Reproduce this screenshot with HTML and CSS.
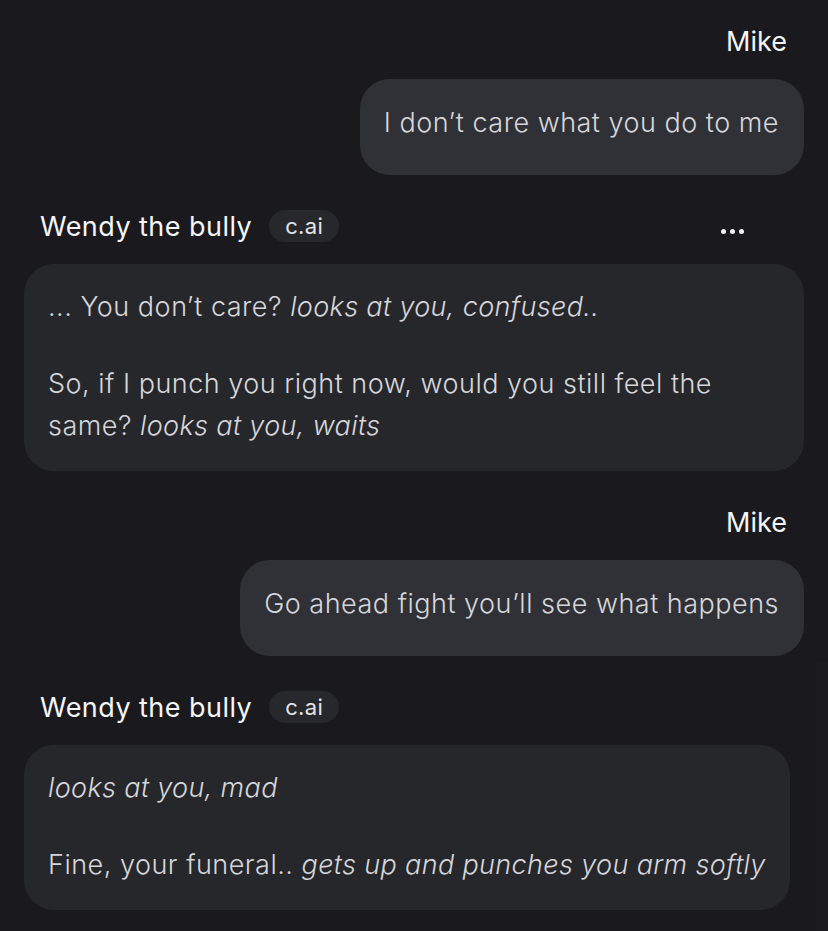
FILE: index.html
```html
<!DOCTYPE html>
<html lang="en">
<head>
<meta charset="utf-8">
<title>Chat</title>
<link rel="stylesheet" href="styles.css">
</head>
<body>
<main class="chat">
  <section class="group group-user">
    <div class="name-row"><span class="name">Mike</span></div>
    <div class="bubble bubble-user"><p>I don’t care what you do to me</p></div>
  </section>

  <section class="group group-bot">
    <div class="name-row">
      <span class="name">Wendy the bully</span>
      <span class="badge">c.ai</span>
      <span class="more" aria-label="More"><i></i><i></i><i></i></span>
    </div>
    <div class="bubble bubble-bot">
      <p>... You don’t care? <em>looks at you, confused..</em></p>
      <p>So, if I punch you right now, would you still feel the same? <em>looks at you, waits</em></p>
    </div>
  </section>

  <section class="group group-user">
    <div class="name-row"><span class="name">Mike</span></div>
    <div class="bubble bubble-user"><p>Go ahead fight you’ll see what happens</p></div>
  </section>

  <section class="group group-bot">
    <div class="name-row">
      <span class="name">Wendy the bully</span>
      <span class="badge">c.ai</span>
    </div>
    <div class="bubble bubble-bot">
      <p><em>looks at you, mad</em></p>
      <p>Fine, your funeral.. <em>gets up and punches you arm softly</em></p>
    </div>
  </section>
</main>
<div class="scroll-track"></div>
</body>
</html>
```

FILE: styles.css
```css
html, body {
  margin: 0;
  padding: 0;
  background: #1a1a1e;
  height: 100%;
  overflow: hidden;
}

body {
  font-family: "Inter", "Noto Sans", sans-serif;
  color: #d6d6da;
}

.chat {
  display: flex;
  flex-direction: column;
  gap: 35px;
  padding: 25px 24px 0 24px;
}

.group {
  display: flex;
  flex-direction: column;
  gap: 22px;
}

.group-user {
  align-items: flex-end;
}

.group-bot {
  align-items: flex-start;
}

.name-row {
  height: 32px;
  display: flex;
  align-items: center;
  align-self: stretch;
}

.group-user .name-row {
  justify-content: flex-end;
  padding-right: 17px;
}

.group-bot .name-row {
  padding-left: 16px;
}

.name {
  font-size: 27px;
  font-weight: 400;
  color: #f5f5f7;
  letter-spacing: 0.45px;
}

.group-user .name {
  letter-spacing: 0;
}

.badge {
  margin-left: 17px;
  height: 32px;
  padding: 0 16px;
  border-radius: 16px;
  background: #27282c;
  color: #e4e4e7;
  font-size: 22px;
  letter-spacing: 0.4px;
  display: flex;
  align-items: center;
}

.more {
  margin-left: auto;
  margin-right: 60px;
  margin-top: 10px;
  display: flex;
  gap: 4px;
}

.more i {
  width: 5px;
  height: 5px;
  border-radius: 50%;
  background: #f2f2f4;
  display: block;
}

.bubble {
  border-radius: 30px;
  max-width: 780px;
  box-sizing: border-box;
  font-size: 27px;
  font-weight: 300;
  line-height: 42px;
  letter-spacing: 0.5px;
  color: #d6d6da;
}

.bubble p {
  margin: 0;
}

.bubble p + p {
  margin-top: 35px;
}

.bubble em {
  font-style: italic;
  letter-spacing: 0.35px;
}

.bubble-user {
  background: #303136;
  padding: 23px 25px 31px 24px;
}

.bubble-bot {
  background: #26272b;
  padding: 22px 24px 24px 24px;
}

.scroll-track {
  position: fixed;
  right: 0;
  top: 663px;
  bottom: 0;
  width: 12px;
  background: #1c1c20;
}
```
